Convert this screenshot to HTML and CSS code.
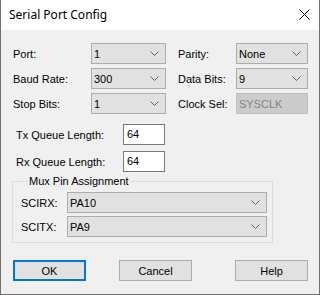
FILE: index.html
```html
<!DOCTYPE html>
<html>
<head>
<meta charset="utf-8">
<link rel="stylesheet" href="styles.css">
</head>
<body>
<div class="dialog">
  <div class="titlebar">
    <span class="title">Serial Port Config</span>
    <svg class="close" width="11" height="11" viewBox="0 0 11 11"><path d="M0.5 0.5 L10.5 10.5 M10.5 0.5 L0.5 10.5" stroke="#000" stroke-width="1" fill="none"/></svg>
  </div>
  <div class="content">
    <div class="grid">
      <span class="label">Port:</span>
      <div class="combo"><span>1</span><svg class="chev" width="9" height="5" viewBox="0 0 9 5"><polyline points="0.5,0.5 4.5,4.5 8.5,0.5" fill="none" stroke="#606060"/></svg></div>
      <span class="label rl">Parity:</span>
      <div class="combo"><span>None</span><svg class="chev" width="9" height="5" viewBox="0 0 9 5"><polyline points="0.5,0.5 4.5,4.5 8.5,0.5" fill="none" stroke="#606060"/></svg></div>

      <span class="label">Baud Rate:</span>
      <div class="combo"><span>300</span><svg class="chev" width="9" height="5" viewBox="0 0 9 5"><polyline points="0.5,0.5 4.5,4.5 8.5,0.5" fill="none" stroke="#606060"/></svg></div>
      <span class="label rl">Data Bits:</span>
      <div class="combo"><span>9</span><svg class="chev" width="9" height="5" viewBox="0 0 9 5"><polyline points="0.5,0.5 4.5,4.5 8.5,0.5" fill="none" stroke="#606060"/></svg></div>

      <span class="label">Stop Bits:</span>
      <div class="combo"><span>1</span><svg class="chev" width="9" height="5" viewBox="0 0 9 5"><polyline points="0.5,0.5 4.5,4.5 8.5,0.5" fill="none" stroke="#606060"/></svg></div>
      <span class="label rl">Clock Sel:</span>
      <div class="combo disabled"><span>SYSCLK</span><svg class="chev" width="9" height="5" viewBox="0 0 9 5"><polyline points="0.5,0.5 4.5,4.5 8.5,0.5" fill="none" stroke="#bfbfbf"/></svg></div>
    </div>

    <div class="qrow first">
      <span class="qlabel">Tx Queue Length:</span>
      <div class="edit">64</div>
    </div>
    <div class="qrow">
      <span class="qlabel">Rx Queue Length:</span>
      <div class="edit">64</div>
    </div>

    <fieldset class="group">
      <legend>Mux Pin Assignment</legend>
      <div class="mrow">
        <span class="mlabel">SCIRX:</span>
        <div class="combo wide"><span>PA10</span><svg class="chev" width="9" height="5" viewBox="0 0 9 5"><polyline points="0.5,0.5 4.5,4.5 8.5,0.5" fill="none" stroke="#606060"/></svg></div>
      </div>
      <div class="mrow">
        <span class="mlabel">SCITX:</span>
        <div class="combo wide"><span>PA9</span><svg class="chev" width="9" height="5" viewBox="0 0 9 5"><polyline points="0.5,0.5 4.5,4.5 8.5,0.5" fill="none" stroke="#606060"/></svg></div>
      </div>
    </fieldset>

    <div class="buttons">
      <div class="btn default">OK</div>
      <div class="btn cancel">Cancel</div>
      <div class="btn help">Help</div>
    </div>
  </div>
</div>
</body>
</html>
```

FILE: styles.css
```css
* { box-sizing: border-box; }
html, body { margin: 0; padding: 0; }
body {
  width: 320px;
  height: 295px;
  overflow: hidden;
  background: #f0f0f0;
  font-family: "Liberation Sans", Arial, sans-serif;
  font-size: 11px;
  color: #000;
}
.dialog {
  width: 320px;
  height: 295px;
  border: 1px solid #6f6f6f;
  border-top: none;
  background: #f0f0f0;
  display: flex;
  flex-direction: column;
}
.titlebar {
  height: 30px;
  background: #ffffff;
  display: flex;
  align-items: center;
  justify-content: space-between;
  padding: 0 9px 0 8px;
  flex: none;
}
.title {
  font-family: "Noto Sans", "Open Sans", sans-serif;
  font-size: 12px;
  color: #000;
  padding-bottom: 1px;
}
.close { display: block; margin-top: -1px; }
.content {
  padding-left: 12px;
  padding-top: 13px;
}
.grid {
  display: grid;
  grid-template-columns: 78px 75px 70px 72px;
  grid-auto-rows: 21px;
  row-gap: 4px;
  align-items: center;
}
.label { white-space: nowrap; }
.rl { padding-left: 12px; }
.combo {
  height: 21px;
  border: 1px solid #adadad;
  background: #e1e1e1;
  display: flex;
  align-items: center;
  justify-content: space-between;
  padding: 0 6px 0 2px;
}
.combo .chev { display: block; }
.combo.disabled {
  background: #cccccc;
  border-color: #bfbfbf;
  color: #838383;
}
.qrow {
  display: flex;
  align-items: center;
  margin-top: 6px;
  padding-left: 3px;
}
.qrow.first { margin-top: 10px; }
.qlabel { width: 107px; }
.edit {
  width: 42px;
  height: 21px;
  border: 1px solid #7a7a7a;
  background: #fff;
  padding-left: 3px;
  line-height: 19px;
}
.group {
  margin: 3px 0 0 -1px;
  width: 261px;
  height: 68px;
  border: 1px solid #dcdcdc;
  padding: 4px 0 0 8px;
  min-width: 0;
}
.group legend {
  padding: 0 1px;
  margin-left: 7px;
  line-height: 13px;
}
.mrow {
  display: flex;
  align-items: center;
  margin-bottom: 3px;
}
.mlabel { width: 46px; }
.combo.wide { width: 200px; }
.buttons {
  display: flex;
  margin-top: 17px;
}
.btn {
  width: 73px;
  height: 21px;
  border: 1px solid #adadad;
  background: #e1e1e1;
  display: flex;
  align-items: center;
  justify-content: center;
}
.btn.cancel { margin-left: 33px; }
.btn.help { margin-left: 43px; }
.btn.default { border: 2px solid #0078d7; }
```
